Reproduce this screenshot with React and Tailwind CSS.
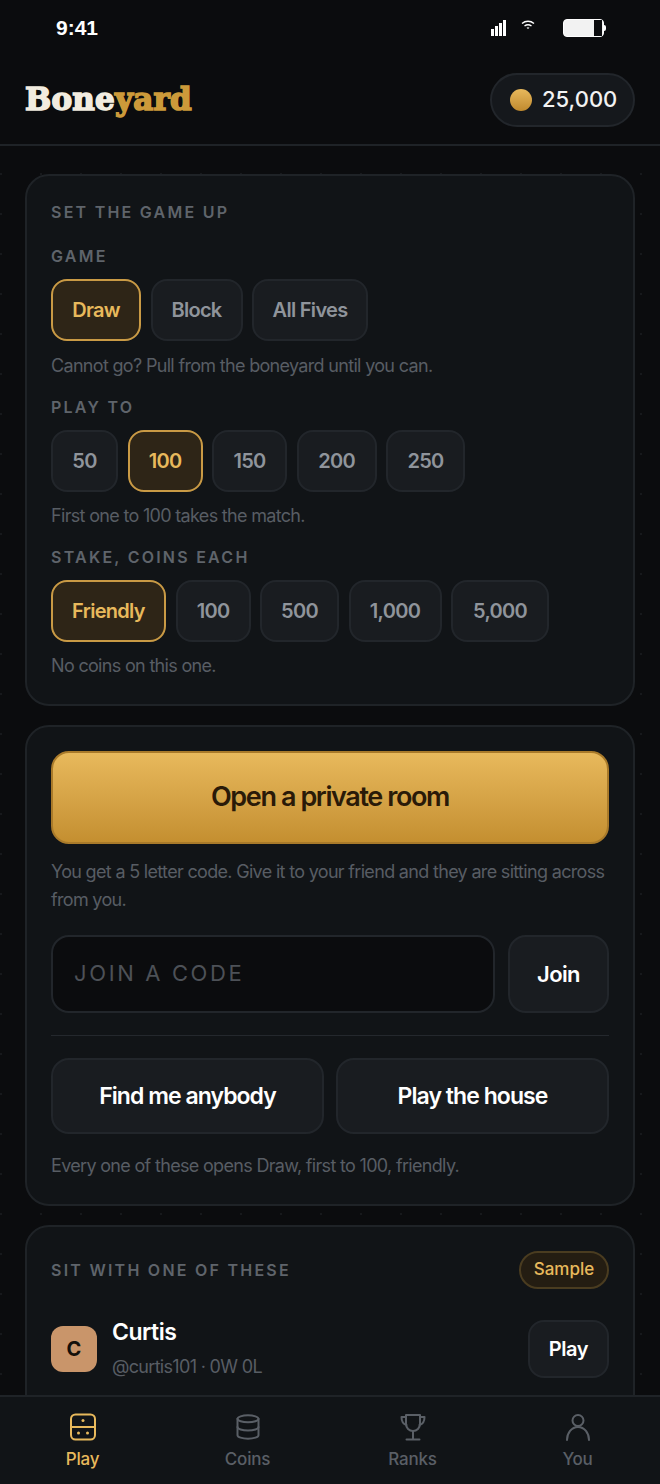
import React from 'react';
import { Database } from 'lucide-react';

const Label = ({ children, className = '' }) => (
  <div className={`text-[16px] leading-[20px] font-semibold tracking-[0.14em] text-[#5f646b] ${className}`}>{children}</div>
);

const Hint = ({ children, className = '' }) => (
  <p className={`text-[18px] leading-[28px] tracking-[-0.68px] text-[#585d64] ${className}`}>{children}</p>
);

const Chip = ({ label, active, width }) => (
  <button
    className={`h-[62px] rounded-[16px] border-2 text-[20px] font-semibold tracking-[-0.7px] ${width} ${
      active
        ? 'border-[#c99a45] bg-[#2e2517] text-[#e8b95c]'
        : 'border-[#22262b] bg-[#191c20] text-[#8f949b]'
    }`}
  >
    {label}
  </button>
);

const DominoIcon = () => (
  <svg width="28" height="28" viewBox="0 0 28 28" fill="none" className="text-[#e8b95c]">
    <rect x="2" y="1.5" width="24" height="25" rx="4.5" stroke="currentColor" strokeWidth="2" />
    <path d="M2 14h24" stroke="currentColor" strokeWidth="2" />
    <circle cx="14" cy="7.5" r="1.5" fill="currentColor" />
    <circle cx="9.5" cy="20" r="1.5" fill="currentColor" />
    <circle cx="18.5" cy="20" r="1.5" fill="currentColor" />
  </svg>
);

const TrophyIcon = () => (
  <svg width="28" height="28" viewBox="0 0 28 28" fill="none" stroke="currentColor" strokeWidth="2" strokeLinecap="round" strokeLinejoin="round">
    <path d="M7 2h14v9a7 7 0 0 1-14 0V2z" />
    <path d="M7 4H2.500c0 4 1.500 7 5 8" />
    <path d="M21 4h4.500c0 4-1.500 7-5 8" />
    <path d="M14 18v8" />
    <path d="M7.500 26.500h13" />
  </svg>
);

const UserIcon = () => (
  <svg width="28" height="28" viewBox="0 0 28 28" fill="none" stroke="currentColor" strokeWidth="2" strokeLinecap="round">
    <circle cx="14" cy="7.500" r="5.500" />
    <path d="M3 27c0-7 4.500-13 11-13s11 6 11 13" />
  </svg>
);

const NavItem = ({ icon, label, active }) => (
  <div className={`flex flex-col items-center gap-[7px] ${active ? 'text-[#e8b95c]' : 'text-[#5a5f66]'}`}>
    <div className="h-[28px] flex items-center">{icon}</div>
    <span className="text-[17px] leading-[22px] font-medium tracking-[-0.2px]">{label}</span>
  </div>
);

export default function App() {
  return (
    <div
      className="relative h-[1484px] w-[660px] overflow-hidden flex flex-col bg-[#0b0c0e] text-white"
      style={{ fontFamily: 'Inter, "Noto Sans", sans-serif' }}
    >
      {/* status bar */}
      <div className="h-[56px] shrink-0 flex items-center justify-between pl-[56px] pr-[56px]">
        <span className="text-[21px] font-semibold [font-family:'Liberation_Sans',sans-serif]">9:41</span>
        <div className="flex items-center">
          <svg width="15" height="16" viewBox="0 0 15 16" fill="white" className="mr-[15px]">
            <rect x="0" y="9" width="3" height="7" />
            <rect x="4" y="6" width="3" height="10" />
            <rect x="8" y="3" width="3" height="13" />
            <rect x="12" y="0" width="3" height="16" />
          </svg>
          <svg width="14" height="12" viewBox="0 0 14 12" fill="none" stroke="white" strokeWidth="1.4" className="mr-[28px] mb-[6px]">
            <path d="M1 4.500C4.500 1.500 9.500 1.500 13 4.500" />
            <path d="M3.500 7C5.500 5.500 8.500 5.500 10.500 7" />
            <path d="M6 9.300C6.600 8.800 7.400 8.800 8 9.300" />
          </svg>
          <div className="relative w-[41px] h-[18px] rounded-[4px] bg-[#f2f2f2] border border-white flex justify-end">
            <div className="w-[8px] h-full bg-[#0b0c0e] mr-[1px]" />
            <div className="absolute -right-[3px] top-[5px] w-[2px] h-[6px] bg-white rounded-r-sm" />
          </div>
        </div>
      </div>

      {/* header */}
      <div className="h-[90px] shrink-0 flex items-center justify-between pl-[25px] pr-[25px] pb-[1px] border-b-2 border-[#1f2327]">
        <div className="text-[31px] leading-none font-bold tracking-[0.2px] [font-family:'DejaVu_Serif',serif] [-webkit-text-stroke:1.6px_currentColor] text-[#f2ecdf]">
          Bone<span className="text-[#cc9a3a]">yard</span>
        </div>
        <div className="h-[54px] w-[145px] flex items-center gap-[10px] pl-[18px] rounded-full border-2 border-[#22262b] bg-[#15181c]">
          <span className="w-[22px] h-[22px] rounded-full bg-gradient-to-b from-[#e8b95c] to-[#c08a2e]" />
          <span className="text-[22px] font-medium text-[#f2f2f2]">25,000</span>
        </div>
      </div>

      {/* content */}
      <div className="flex-1 min-h-0 overflow-hidden px-[25px] pt-[28px] flex flex-col gap-[19px] bg-[radial-gradient(#17191c_1.5px,transparent_1.5px)] bg-[size:40px_40px] bg-[position:-19px_8px]">
        <section className="shrink-0 h-[532px] rounded-[24px] border-2 border-[#1f2327] bg-[#111417] px-[24px] pt-[26px]">
          <Label>SET THE GAME UP</Label>
          <Label className="mt-[24px]">GAME</Label>
          <div className="flex gap-[9.5px] mt-[13px]">
            <Chip label="Draw" active width="w-[90px]" />
            <Chip label="Block" width="w-[92px]" />
            <Chip label="All Fives" width="w-[116px]" />
          </div>
          <Hint className="mt-[11px]">Cannot go? Pull from the boneyard until you can.</Hint>
          <Label className="mt-[17px]">PLAY TO</Label>
          <div className="flex gap-[9.5px] mt-[13px]">
            <Chip label="50" width="w-[67px]" />
            <Chip label="100" active width="w-[75px]" />
            <Chip label="150" width="w-[75px]" />
            <Chip label="200" width="w-[80px]" />
            <Chip label="250" width="w-[79px]" />
          </div>
          <Hint className="mt-[10px]">First one to 100 takes the match.</Hint>
          <Label className="mt-[17px]">STAKE, COINS EACH</Label>
          <div className="flex gap-[9.5px] mt-[13px]">
            <Chip label="Friendly" active width="w-[115px]" />
            <Chip label="100" width="w-[75px]" />
            <Chip label="500" width="w-[79px]" />
            <Chip label="1,000" width="w-[93px]" />
            <Chip label="5,000" width="w-[98px]" />
          </div>
          <Hint className="mt-[10px]">No coins on this one.</Hint>
        </section>

        <section className="shrink-0 h-[481px] rounded-[24px] border-2 border-[#1f2327] bg-[#111417] px-[24px] pt-[24px]">
          <button className="w-full h-[93px] rounded-[18px] border-2 border-[#a97a2a] bg-gradient-to-b from-[#e8b95c] to-[#c48f30] text-[27px] font-semibold tracking-[-1.4px] text-[#2a1a08]">
            Open a private room
          </button>
          <Hint className="mt-[14px]">You get a 5 letter code. Give it to your friend and they are sitting across from you.</Hint>
          <div className="flex gap-[13px] mt-[21px]">
            <div className="flex-1 h-[78px] pb-[2px] rounded-[18px] border-2 border-[#22262b] bg-[#0b0c0e] flex items-center pl-[21px] text-[22px] tracking-[0.12em] text-[#4d5157]">
              JOIN A CODE
            </div>
            <button className="w-[101px] h-[78px] rounded-[18px] border-2 border-[#22262b] bg-[#191c20] text-[22px] font-semibold tracking-[-0.6px]">
              Join
            </button>
          </div>
          <div className="h-[1px] bg-[#24282d] mt-[22px]" />
          <div className="flex gap-[12px] mt-[22px]">
            <button className="flex-1 h-[76px] rounded-[18px] border-2 border-[#22262b] bg-[#191c20] text-[23px] font-semibold tracking-[-0.95px]">
              Find me anybody
            </button>
            <button className="flex-1 h-[76px] rounded-[18px] border-2 border-[#22262b] bg-[#191c20] text-[23px] font-semibold tracking-[-0.95px]">
              Play the house
            </button>
          </div>
          <Hint className="mt-[18px]">Every one of these opens Draw, first to 100, friendly.</Hint>
        </section>

        <section className="shrink-0 h-[300px] rounded-[24px] border-2 border-[#1f2327] bg-[#111417] px-[24px] pt-[24px]">
          <div className="flex items-center justify-between">
            <Label>SIT WITH ONE OF THESE</Label>
            <span className="h-[38px] w-[90px] flex items-center justify-center rounded-full border-2 border-[#4a3c20] bg-[#241d12] text-[17px] font-medium text-[#e8b95c]">
              Sample
            </span>
          </div>
          <div className="flex items-center justify-between mt-[29px]">
            <div className="flex items-center gap-[15px]">
              <div className="w-[46px] h-[46px] rounded-[12px] bg-[#c9956a] flex items-center justify-center text-[20px] font-bold text-[#14100a]">
                C
              </div>
              <div>
                <div className="text-[23px] leading-[28px] font-semibold tracking-[-0.5px]">Curtis</div>
                <div className="mt-[8px] text-[18px] leading-[26px] tracking-[-0.68px] text-[#585d64]">@curtis101 · 0W 0L</div>
              </div>
            </div>
            <button className="w-[81px] h-[58px] rounded-[16px] border-2 border-[#22262b] bg-[#191c20] text-[20px] font-semibold tracking-[-0.4px]">
              Play
            </button>
          </div>
        </section>
      </div>

      {/* bottom nav */}
      <nav className="absolute bottom-0 left-0 right-0 h-[89px] border-t-2 border-[#1f2327] bg-[#111417] grid grid-cols-4 pt-[16px]">
        <NavItem icon={<DominoIcon />} label="Play" active />
        <NavItem icon={<Database size={28} strokeWidth={1.7} />} label="Coins" />
        <NavItem icon={<TrophyIcon />} label="Ranks" />
        <NavItem icon={<UserIcon />} label="You" />
      </nav>
    </div>
  );
}
